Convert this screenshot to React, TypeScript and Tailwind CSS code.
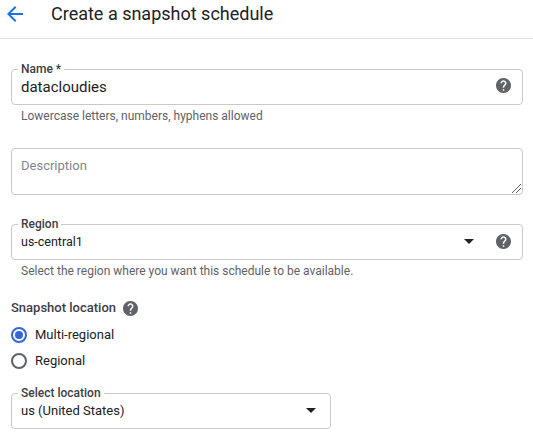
const HelpIcon = ({ className }: { className: string }) => (
  <svg viewBox="2 2 20 20" className={className} fill="#5f6368">
    <path d="M12 2C6.48 2 2 6.48 2 12s4.48 10 10 10 10-4.48 10-10S17.52 2 12 2zm1 17h-2v-2h2v2zm2.07-7.75l-.9.92C13.45 12.9 13 13.5 13 15h-2v-.5c0-1.1.45-2.1 1.17-2.83l1.24-1.26c.37-.36.59-.86.59-1.41 0-1.1-.9-2-2-2s-2 .9-2 2H8c0-2.21 1.79-4 4-4s4 1.79 4 4c0 .88-.36 1.68-.93 2.25z" />
  </svg>
);

const Caret = () => <div className="w-0 h-0 border-x-[5px] border-x-transparent border-t-[5px] border-t-[#202124]" />;

const Outlined = ({ label, value, valueClass, children, className }: { label: string; value: string; valueClass: string; children?: React.ReactNode; className: string }) => (
  <div className={`relative h-[36px] border border-[#c8c9cb] rounded-[4px] flex items-center pl-[9px] ${className}`}>
    <span className="absolute left-[6px] top-[-8px] bg-white px-[3px] text-[12px] leading-[14px] font-medium text-[#3c4043]">{label}</span>
    <span className={`leading-[16px] text-[#202124] ${valueClass}`}>{value}</span>
    {children}
  </div>
);

const Hint = ({ text }: { text: string }) => (
  <p className="text-[12px] leading-[14px] text-[#5f6368] pl-[10px] mt-[4px]">{text}</p>
);

const App = () => {
  return (
    <div className="w-[533px] h-[440px] overflow-hidden bg-white font-['Roboto',sans-serif]">
      <header className="h-[39px] pb-[10px] border-b border-[#e0e0e0] flex items-center">
        <svg viewBox="0 0 24 24" className="w-[24px] h-[24px] ml-[3px]" fill="#1a73e8">
          <path d="M20 11H7.83l5.59-5.59L12 4l-8 8 8 8 1.41-1.41L7.83 13H20v-2z" />
        </svg>
        <h1 className="ml-[24px] text-[18px] leading-[24px] text-[#202124]">Create a snapshot schedule</h1>
      </header>
      <main className="pl-[11px] pr-[10px]">
        <Outlined label="Name *" value="datacloudies" valueClass="text-[15px]" className="mt-[30px]">
          <HelpIcon className="absolute right-[11px] top-[8px] w-[15px] h-[15px]" />
        </Outlined>
        <Hint text="Lowercase letters, numbers, hyphens allowed" />
        <div className="relative mt-[25px] h-[47px] border border-[#c8c9cb] rounded-[4px] pl-[9px] pt-[9px]">
          <span className="text-[13px] leading-[16px] text-[#80868b] block">Description</span>
          <svg viewBox="0 0 9 9" className="absolute right-[1px] bottom-[1px] w-[9px] h-[9px]" stroke="#5f6368" strokeWidth="1">
            <path d="M0 9L9 0M4 9L9 4" />
          </svg>
        </div>
        <Outlined label="Region" value="us-central1" valueClass="text-[12.5px]" className="mt-[29px]">
          <div className="absolute right-[48px] top-[14px]"><Caret /></div>
          <HelpIcon className="absolute right-[11px] top-[9px] w-[15px] h-[15px]" />
        </Outlined>
        <Hint text="Select the region where you want this schedule to be available." />
        <div className="mt-[20px] flex items-center h-[20px]">
          <span className="text-[13px] leading-[16px] font-medium text-[#3c4043]">Snapshot location</span>
          <HelpIcon className="w-[15px] h-[15px] ml-[7px]" />
        </div>
        <div className="mt-[4px] flex items-center h-[26px]">
          <div className="w-[16px] h-[16px] rounded-full border-2 border-[#3367d6] flex items-center justify-center">
            <div className="w-[8px] h-[8px] rounded-full bg-[#3367d6]" />
          </div>
          <span className="ml-[8px] text-[13px] leading-[16px] text-[#202124]">Multi-regional</span>
        </div>
        <div className="flex items-center h-[26px]">
          <div className="w-[16px] h-[16px] rounded-full border-2 border-[#5f6368]" />
          <span className="ml-[8px] text-[13px] leading-[16px] text-[#202124]">Regional</span>
        </div>
        <Outlined label="Select location" value="us (United States)" valueClass="text-[13px]" className="mt-[19px] w-[320px]">
          <div className="absolute right-[14px] top-[14px]"><Caret /></div>
        </Outlined>
      </main>
    </div>
  );
};

export default App;
